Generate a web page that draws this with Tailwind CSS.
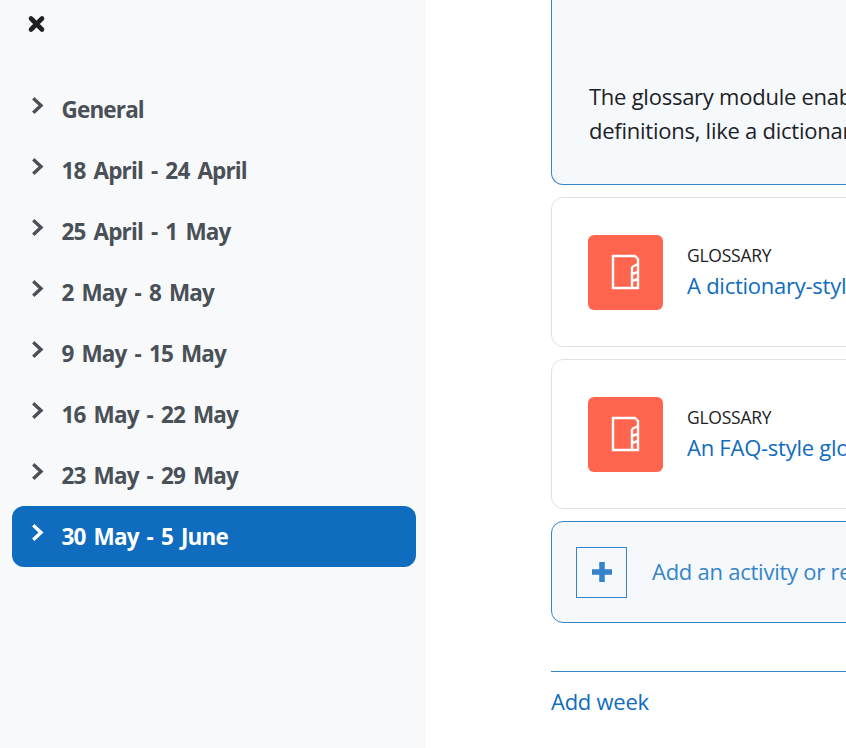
<!DOCTYPE html>
<html lang="en">
<head>
  <meta charset="UTF-8" />
  <title>Course index</title>
  <script src="https://cdn.jsdelivr.net/npm/@tailwindcss/browser@4"></script>
</head>
<body class="bg-white overflow-hidden font-['Open_Sans','Noto_Sans',sans-serif]">
  <div class="flex w-[846px] h-[748px] overflow-hidden">

    <!-- Course index drawer -->
    <aside class="w-[426px] shrink-0 bg-[#f8f9fa] pl-3 pr-2.5">
      <div class="h-[79px] pt-[15px] pl-[15px]">
        <svg class="w-5 h-5" viewBox="0 0 20 20" fill="none" stroke="#1d2125" stroke-width="4.6" stroke-linecap="round"><path d="M4 3.5l11 11M15 3.5l-11 11" /></svg>
      </div>
      <ul class="text-[#495057] text-[22.5px] font-bold tracking-[-0.85px] [word-spacing:3px]">
        <li class="h-[61px] flex rounded-xl pl-5">
          <svg class="w-4 h-5 mt-[17px] shrink-0" viewBox="0 0 16 20" fill="none" stroke="currentColor" stroke-width="3.4" stroke-linecap="square"><path d="M2.5 3.5l6.5 6-6.5 6" /></svg>
          <span class="ml-[13.5px] mt-3.5">General</span>
        </li>
        <li class="h-[61px] flex rounded-xl pl-5">
          <svg class="w-4 h-5 mt-[17px] shrink-0" viewBox="0 0 16 20" fill="none" stroke="currentColor" stroke-width="3.4" stroke-linecap="square"><path d="M2.5 3.5l6.5 6-6.5 6" /></svg>
          <span class="ml-[13.5px] mt-3.5">18 April - 24 April</span>
        </li>
        <li class="h-[61px] flex rounded-xl pl-5">
          <svg class="w-4 h-5 mt-[17px] shrink-0" viewBox="0 0 16 20" fill="none" stroke="currentColor" stroke-width="3.4" stroke-linecap="square"><path d="M2.5 3.5l6.5 6-6.5 6" /></svg>
          <span class="ml-[13.5px] mt-3.5">25 April - 1 May</span>
        </li>
        <li class="h-[61px] flex rounded-xl pl-5">
          <svg class="w-4 h-5 mt-[17px] shrink-0" viewBox="0 0 16 20" fill="none" stroke="currentColor" stroke-width="3.4" stroke-linecap="square"><path d="M2.5 3.5l6.5 6-6.5 6" /></svg>
          <span class="ml-[13.5px] mt-3.5">2 May - 8 May</span>
        </li>
        <li class="h-[61px] flex rounded-xl pl-5">
          <svg class="w-4 h-5 mt-[17px] shrink-0" viewBox="0 0 16 20" fill="none" stroke="currentColor" stroke-width="3.4" stroke-linecap="square"><path d="M2.5 3.5l6.5 6-6.5 6" /></svg>
          <span class="ml-[13.5px] mt-3.5">9 May - 15 May</span>
        </li>
        <li class="h-[61px] flex rounded-xl pl-5">
          <svg class="w-4 h-5 mt-[17px] shrink-0" viewBox="0 0 16 20" fill="none" stroke="currentColor" stroke-width="3.4" stroke-linecap="square"><path d="M2.5 3.5l6.5 6-6.5 6" /></svg>
          <span class="ml-[13.5px] mt-3.5">16 May - 22 May</span>
        </li>
        <li class="h-[61px] flex rounded-xl pl-5">
          <svg class="w-4 h-5 mt-[17px] shrink-0" viewBox="0 0 16 20" fill="none" stroke="currentColor" stroke-width="3.4" stroke-linecap="square"><path d="M2.5 3.5l6.5 6-6.5 6" /></svg>
          <span class="ml-[13.5px] mt-3.5">23 May - 29 May</span>
        </li>
        <li class="h-[61px] flex rounded-xl pl-5 bg-[#0f6cbf] text-white">
          <svg class="w-4 h-5 mt-[17px] shrink-0" viewBox="0 0 16 20" fill="none" stroke="currentColor" stroke-width="3.4" stroke-linecap="square"><path d="M2.5 3.5l6.5 6-6.5 6" /></svg>
          <span class="ml-[13.5px] mt-3.5">30 May - 5 June</span>
        </li>
      </ul>
    </aside>

    <!-- Course content -->
    <main class="pl-[125px] w-[1000px] shrink-0 text-[22px] tracking-[-0.25px]">
      <div class="h-[185px] w-[760px] bg-[#f5f9fc] border border-t-0 border-[#3584c9] rounded-b-xl pl-[37px] pt-[79px] text-[#1d2125] leading-[34px] whitespace-nowrap">
        <p>The glossary module enables participants to create and maintain</p>
        <p>definitions, like a dictionary, or to collect and organise resources</p>
      </div>

      <div class="mt-3 h-[150px] w-[760px] border border-[#dee2e6] rounded-xl flex items-center pl-9">
        <div class="w-[75px] h-[75px] bg-[#ff644e] rounded-md flex items-center justify-center">
          <svg class="w-[37px] h-[37px]" viewBox="0 0 37 37" fill="none" stroke="#fff" stroke-width="2.4"><path d="M6 2h22l3 3v29H6zM25 13v21M25 13l6-3M25 20l6-2M25 27l6-2" /></svg>
        </div>
        <div class="ml-6">
          <div class="text-[#1d2125] text-[17.5px] leading-6 -mt-px">GLOSSARY</div>
          <a href="#" class="block text-[#0f6cbf] leading-8 mt-0.5 -mb-px whitespace-nowrap">A dictionary-style glossary of course terms</a>
        </div>
      </div>

      <div class="mt-3 h-[150px] w-[760px] border border-[#dee2e6] rounded-xl flex items-center pl-9">
        <div class="w-[75px] h-[75px] bg-[#ff644e] rounded-md flex items-center justify-center">
          <svg class="w-[37px] h-[37px]" viewBox="0 0 37 37" fill="none" stroke="#fff" stroke-width="2.4"><path d="M6 2h22l3 3v29H6zM25 13v21M25 13l6-3M25 20l6-2M25 27l6-2" /></svg>
        </div>
        <div class="ml-6">
          <div class="text-[#1d2125] text-[17.5px] leading-6 -mt-px">GLOSSARY</div>
          <a href="#" class="block text-[#0f6cbf] leading-8 mt-0.5 -mb-px whitespace-nowrap">An FAQ-style glossary of questions</a>
        </div>
      </div>

      <div class="mt-3 h-[102px] w-[760px] bg-[#f5f9fc] border border-[#3584c9] rounded-xl flex items-center pl-6 text-[#3584c9]">
        <div class="w-[51px] h-[51px] border border-[#3584c9] flex items-center justify-center">
          <svg class="w-5 h-5" viewBox="0 0 20 20" fill="none" stroke="currentColor" stroke-width="5.5"><path d="M10 0v20M0 10h20" /></svg>
        </div>
        <span class="ml-[25px] -mt-0.5 whitespace-nowrap">Add an activity or resource</span>
      </div>

      <div class="mt-12 w-[760px] border-t border-[#3584c9] pt-[13px]">
        <a href="#" class="text-[#0f6cbf] leading-8">Add week</a>
      </div>
    </main>
  </div>
</body>
</html>
